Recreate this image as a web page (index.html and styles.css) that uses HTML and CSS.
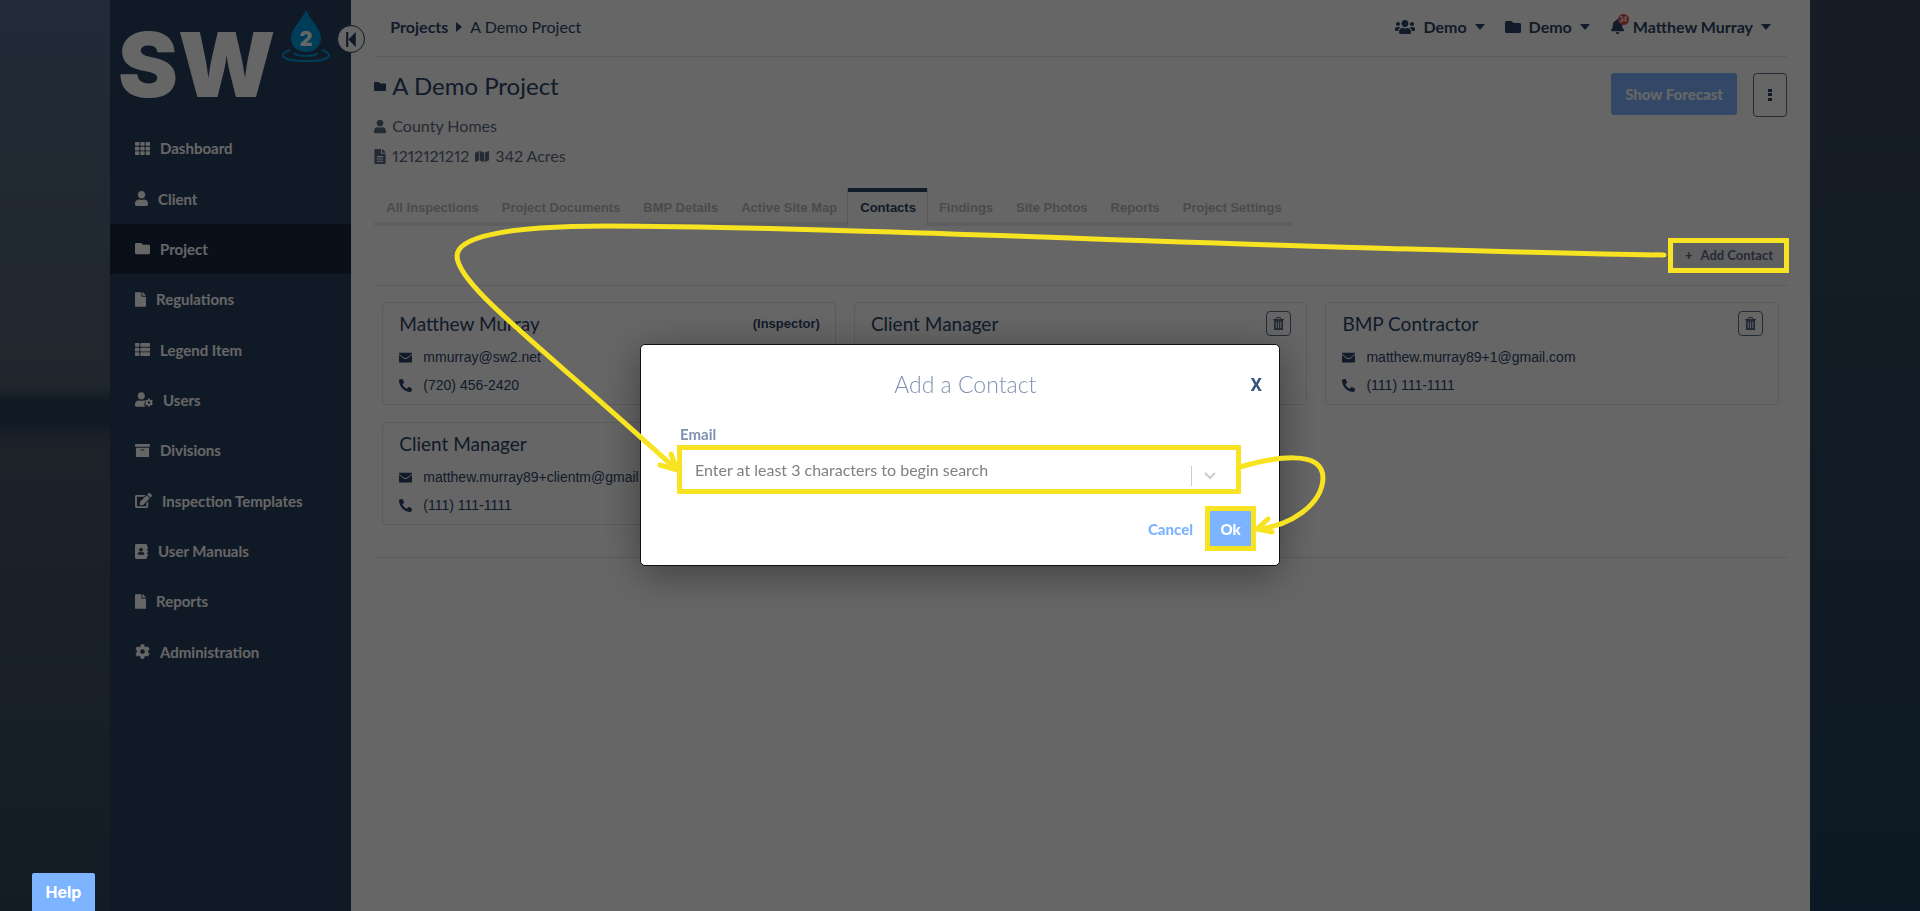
FILE: index.html
```
<!DOCTYPE html>
<html lang="en">
<head>
    <meta charset="UTF-8">
    <meta name="viewport" content="width=device-width, initial-scale=1.0">
    <title>A Demo Project - Contacts</title>
    <link rel="stylesheet" href="styles.css">
</head>
<body>
    <!-- Icon set -->
    <svg class="icon-set" aria-hidden="true">
        <symbol id="i-grid" viewBox="0 0 512 512"><path d="M24 32h102a24 24 0 0 1 24 24v80a24 24 0 0 1-24 24H24a24 24 0 0 1-24-24V56a24 24 0 0 1 24-24zM205 32h102a24 24 0 0 1 24 24v80a24 24 0 0 1-24 24H205a24 24 0 0 1-24-24V56a24 24 0 0 1 24-24zM386 32h102a24 24 0 0 1 24 24v80a24 24 0 0 1-24 24H386a24 24 0 0 1-24-24V56a24 24 0 0 1 24-24zM24 192h102a24 24 0 0 1 24 24v80a24 24 0 0 1-24 24H24a24 24 0 0 1-24-24v-80a24 24 0 0 1 24-24zM205 192h102a24 24 0 0 1 24 24v80a24 24 0 0 1-24 24H205a24 24 0 0 1-24-24v-80a24 24 0 0 1 24-24zM386 192h102a24 24 0 0 1 24 24v80a24 24 0 0 1-24 24H386a24 24 0 0 1-24-24v-80a24 24 0 0 1 24-24zM24 352h102a24 24 0 0 1 24 24v80a24 24 0 0 1-24 24H24a24 24 0 0 1-24-24v-80a24 24 0 0 1 24-24zM205 352h102a24 24 0 0 1 24 24v80a24 24 0 0 1-24 24H205a24 24 0 0 1-24-24v-80a24 24 0 0 1 24-24zM386 352h102a24 24 0 0 1 24 24v80a24 24 0 0 1-24 24H386a24 24 0 0 1-24-24v-80a24 24 0 0 1 24-24z"/></symbol>
        <symbol id="i-list" viewBox="0 0 512 512"><path d="M24 32h102a24 24 0 0 1 24 24v80a24 24 0 0 1-24 24H24a24 24 0 0 1-24-24V56a24 24 0 0 1 24-24zM205 32h283a24 24 0 0 1 24 24v80a24 24 0 0 1-24 24H205a24 24 0 0 1-24-24V56a24 24 0 0 1 24-24zM24 192h102a24 24 0 0 1 24 24v80a24 24 0 0 1-24 24H24a24 24 0 0 1-24-24v-80a24 24 0 0 1 24-24zM205 192h283a24 24 0 0 1 24 24v80a24 24 0 0 1-24 24H205a24 24 0 0 1-24-24v-80a24 24 0 0 1 24-24zM24 352h102a24 24 0 0 1 24 24v80a24 24 0 0 1-24 24H24a24 24 0 0 1-24-24v-80a24 24 0 0 1 24-24zM205 352h283a24 24 0 0 1 24 24v80a24 24 0 0 1-24 24H205a24 24 0 0 1-24-24v-80a24 24 0 0 1 24-24z"/></symbol>
        <symbol id="i-user" viewBox="0 0 448 512"><path d="M224 256c70.7 0 128-57.3 128-128S294.7 0 224 0 96 57.3 96 128s57.3 128 128 128zm89.6 32h-16.7c-22.2 10.2-46.9 16-72.9 16s-50.6-5.8-72.9-16h-16.7C60.2 288 0 348.2 0 422.4V464c0 26.5 21.5 48 48 48h352c26.5 0 48-21.5 48-48v-41.6c0-74.2-60.2-134.4-134.4-134.4z"/></symbol>
        <symbol id="i-folder" viewBox="0 0 512 512"><path d="M464 128H272l-64-64H48C21.49 64 0 85.49 0 112v288c0 26.51 21.49 48 48 48h416c26.51 0 48-21.49 48-48V176c0-26.51-21.49-48-48-48z"/></symbol>
        <symbol id="i-file" viewBox="0 0 384 512"><path d="M224 136V0H24C10.7 0 0 10.7 0 24v464c0 13.3 10.7 24 24 24h336c13.3 0 24-10.7 24-24V160H248c-13.2 0-24-10.8-24-24zm160-14.1v6.1H256V0h6.1c6.4 0 12.5 2.5 17 7l97.9 98c4.5 4.5 7 10.6 7 16.9z"/></symbol>
        <symbol id="i-file-text" viewBox="0 0 384 512"><path fill-rule="evenodd" d="M224 136V0H24C10.7 0 0 10.7 0 24v464c0 13.3 10.7 24 24 24h336c13.3 0 24-10.7 24-24V160H248c-13.2 0-24-10.8-24-24zM84 240h216v40H84zM84 320h216v40H84zM84 400h216v32H84zM384 121.9v6.1H256V0h6.1c6.4 0 12.5 2.5 17 7l97.9 98c4.5 4.5 7 10.6 7 16.9z"/></symbol>
        <symbol id="i-user-cog" viewBox="0 0 640 512"><path d="M224 256c70.7 0 128-57.3 128-128S294.7 0 224 0 96 57.3 96 128s57.3 128 128 128zm89.6 32h-16.7c-22.2 10.2-46.9 16-72.9 16s-50.6-5.8-72.9-16h-16.7C60.2 288 0 348.2 0 422.4V464c0 26.5 21.5 48 48 48h325c-25-22-45-58-48-90l22-26-2-44 20-58z"/><g transform="translate(350 218) scale(.57)"><path d="M487.4 315.7l-42.6-24.6c4.3-23.2 4.3-47 0-70.2l42.6-24.6c4.9-2.8 7.1-8.6 5.5-14-11.1-35.6-30-67.8-54.7-94.6-3.8-4.1-10-5.1-14.8-2.3L380.8 110c-17.9-15.4-38.5-27.3-60.8-35.1V25.8c0-5.6-3.9-10.5-9.4-11.7-36.7-8.2-74.3-7.8-109.2 0-5.5 1.2-9.4 6.1-9.4 11.7V75c-22.2 7.9-42.8 19.8-60.8 35.1L88.7 85.5c-4.9-2.8-11-1.9-14.8 2.3-24.7 26.7-43.6 58.9-54.7 94.6-1.7 5.4.6 11.2 5.5 14L67.3 221c-4.3 23.2-4.3 47 0 70.2l-42.6 24.6c-4.9 2.8-7.1 8.6-5.5 14 11.1 35.6 30 67.8 54.7 94.6 3.8 4.1 10 5.1 14.8 2.3l42.6-24.6c17.9 15.4 38.5 27.3 60.8 35.1v49.2c0 5.6 3.9 10.5 9.4 11.7 36.7 8.2 74.3 7.8 109.2 0 5.5-1.2 9.4-6.1 9.4-11.7v-49.2c22.2-7.9 42.8-19.8 60.8-35.1l42.6 24.6c4.9 2.8 11 1.9 14.8-2.3 24.7-26.7 43.6-58.9 54.7-94.6 1.5-5.5-.7-11.3-5.6-14.1zM256 336c-44.1 0-80-35.9-80-80s35.9-80 80-80 80 35.9 80 80-35.9 80-80 80z"/></g></symbol>
        <symbol id="i-archive" viewBox="0 0 512 512"><path d="M32 448c0 17.7 14.3 32 32 32h384c17.7 0 32-14.3 32-32V160H32v288zm160-212c0-6.6 5.4-12 12-12h104c6.6 0 12 5.4 12 12v8c0 6.6-5.4 12-12 12H204c-6.6 0-12-5.4-12-12v-8zM480 32H32C14.3 32 0 46.3 0 64v48c0 8.8 7.2 16 16 16h480c8.8 0 16-7.2 16-16V64c0-17.7-14.3-32-32-32z"/></symbol>
        <symbol id="i-edit" viewBox="0 0 576 512"><path d="M402.6 83.2l90.2 90.2c3.8 3.8 3.8 10 0 13.8L274.4 405.6l-92.8 10.3c-12.4 1.4-22.9-9.1-21.5-21.5l10.3-92.8L388.8 83.2c3.8-3.8 10-3.8 13.8 0zm162-22.9l-48.8-48.8c-15.2-15.2-39.9-15.2-55.2 0l-35.4 35.4c-3.8 3.8-3.8 10 0 13.8l90.2 90.2c3.8 3.8 10 3.8 13.8 0l35.4-35.4c15.2-15.3 15.2-40 0-55.2zM384 346.2V448H64V128h229.8c3.2 0 6.2-1.3 8.5-3.5l40-40c7.6-7.6 2.2-20.5-8.5-20.5H48C21.5 64 0 85.5 0 112v352c0 26.5 21.5 48 48 48h352c26.5 0 48-21.5 48-48V306.2c0-10.7-12.9-16-20.5-8.5l-40 40c-2.2 2.3-3.5 5.3-3.5 8.5z"/></symbol>
        <symbol id="i-book" viewBox="0 0 448 512"><path fill-rule="evenodd" d="M48 0h320c26 0 48 22 48 48v48h20c7 0 12 5 12 12v40c0 7-5 12-12 12h-20v64h20c7 0 12 5 12 12v40c0 7-5 12-12 12h-20v64h20c7 0 12 5 12 12v40c0 7-5 12-12 12h-20v48c0 26-22 48-48 48H48c-26 0-48-22-48-48V48C0 22 22 0 48 0zM208 128a64 64 0 1 0 0 128 64 64 0 1 0 0-128zM163 272c-37 0-67 26-67 58v19c0 11 10 19 22 19h180c12 0 22-8 22-19v-19c0-32-30-58-67-58-30 12-60 12-90 0z"/></symbol>
        <symbol id="i-cog" viewBox="0 0 512 512"><path d="M487.4 315.7l-42.6-24.6c4.3-23.2 4.3-47 0-70.2l42.6-24.6c4.9-2.8 7.1-8.6 5.5-14-11.1-35.6-30-67.8-54.7-94.6-3.8-4.1-10-5.1-14.8-2.3L380.8 110c-17.9-15.4-38.5-27.3-60.8-35.1V25.8c0-5.6-3.9-10.5-9.4-11.7-36.7-8.2-74.3-7.8-109.2 0-5.5 1.2-9.4 6.1-9.4 11.7V75c-22.2 7.9-42.8 19.8-60.8 35.1L88.7 85.5c-4.9-2.8-11-1.9-14.8 2.3-24.7 26.7-43.6 58.9-54.7 94.6-1.7 5.4.6 11.2 5.5 14L67.3 221c-4.3 23.2-4.3 47 0 70.2l-42.6 24.6c-4.9 2.8-7.1 8.6-5.5 14 11.1 35.6 30 67.8 54.7 94.6 3.8 4.1 10 5.1 14.8 2.3l42.6-24.6c17.9 15.4 38.5 27.3 60.8 35.1v49.2c0 5.6 3.9 10.5 9.4 11.7 36.7 8.2 74.3 7.8 109.2 0 5.5-1.2 9.4-6.1 9.4-11.7v-49.2c22.2-7.9 42.8-19.8 60.8-35.1l42.6 24.6c4.9 2.8 11 1.9 14.8-2.3 24.7-26.7 43.6-58.9 54.7-94.6 1.5-5.5-.7-11.3-5.6-14.1zM256 336c-44.1 0-80-35.9-80-80s35.9-80 80-80 80 35.9 80 80-35.9 80-80 80z"/></symbol>
        <symbol id="i-map" viewBox="0 0 576 512"><path d="M0 117.66v346.32c0 11.32 11.43 19.06 21.94 14.86L160 416V32L20.12 87.95A32 32 0 0 0 0 117.66zM192 416l192 64V96L192 32v384zM554.06 33.16L416 96v384l139.88-55.95A32 32 0 0 0 576 394.34V48.02c0-11.32-11.43-19.06-21.94-14.86z"/></symbol>
        <symbol id="i-users" viewBox="0 0 640 512"><path d="M96 224c35.3 0 64-28.7 64-64s-28.7-64-64-64-64 28.7-64 64 28.7 64 64 64zm448 0c35.3 0 64-28.7 64-64s-28.7-64-64-64-64 28.7-64 64 28.7 64 64 64zm32 32h-64c-17.6 0-33.5 7.1-45.1 18.6 40.3 22.1 68.9 62 75.1 109.4h66c17.7 0 32-14.3 32-32v-32c0-35.3-28.7-64-64-64zm-256 0c61.9 0 112-50.1 112-112S381.9 32 320 32 208 82.1 208 144s50.1 112 112 112zm76.8 32h-8.3c-20.8 10-43.9 16-68.5 16s-47.6-6-68.5-16h-8.3C179.6 288 128 339.6 128 403.2V432c0 26.5 21.5 48 48 48h288c26.5 0 48-21.5 48-48v-28.8c0-63.6-51.6-115.2-115.2-115.2zm-223.7-13.4C161.5 263.1 145.6 256 128 256H64c-35.3 0-64 28.7-64 64v32c0 17.7 14.3 32 32 32h65.9c6.3-47.4 34.9-87.3 75.2-109.4z"/></symbol>
        <symbol id="i-bell" viewBox="0 0 448 512"><path d="M224 512c35.32 0 63.97-28.65 63.97-64H160.03c0 35.35 28.65 64 63.97 64zm215.39-149.71c-19.32-20.76-55.47-51.99-55.47-154.29 0-77.7-54.48-139.9-127.94-155.16V32c0-17.67-14.32-32-31.98-32s-31.98 14.33-31.98 32v20.84C118.56 68.1 64.08 130.3 64.08 208c0 102.3-36.15 133.53-55.47 154.29-6 6.45-8.66 14.16-8.61 21.71.11 16.4 12.98 32 32.1 32h383.8c19.12 0 32-15.6 32.1-32 .05-7.55-2.61-15.27-8.61-21.71z"/></symbol>
        <symbol id="i-mail" viewBox="0 0 512 512"><path d="M24 64h464c13 0 24 11 24 24v16c-70 60-140 115-205 165-30 24-72 24-102 0C140 219 70 164 0 104V88c0-13 11-24 24-24zM0 152c58 48 118 94 180 141 45 34 107 34 152 0 62-47 122-93 180-141v272c0 13-11 24-24 24H24c-13 0-24-11-24-24z"/></symbol>
        <symbol id="i-phone" viewBox="0 0 512 512"><path transform="translate(512 0) scale(-1 1)" d="M493.4 24.6l-104-24c-11.3-2.6-22.9 3.3-27.5 13.9l-48 112c-4.2 9.8-1.4 21.3 6.9 28l60.6 49.6c-36 76.7-98.9 140.5-177.2 177.2l-49.6-60.6c-6.8-8.3-18.2-11.1-28-6.9l-112 48C3.9 366.5-2 378.1.6 389.4l24 104C27.1 504.2 36.7 512 48 512c256.1 0 464-207.5 464-464 0-11.2-7.7-20.9-18.6-23.4z"/></symbol>
        <symbol id="i-trash" viewBox="0 0 12 14"><path fill-rule="evenodd" d="M4 0h4l1 2h3v1.5h-1V14H1V3.5H0V2h3zM4.5 1L4 2h4l-.5-1zM3 5v7h1V5zM5.5 5v7h1V5zM8 5v7h1V5z"/></symbol>
        <symbol id="i-first" viewBox="0 0 10 14"><path d="M0 0h2v14H0zM9 0v14L2 7z"/></symbol>
        <symbol id="i-down" viewBox="0 0 10 6"><path d="M0 0h10L5 6z"/></symbol>
        <symbol id="i-right" viewBox="0 0 6 10"><path d="M0 0v10l6-5z"/></symbol>
        <symbol id="i-dots" viewBox="0 0 4 12"><path d="M0 0h4v3H0zM0 4h4v3H0zM0 9h4v3H0z"/></symbol>
        <symbol id="i-chevron" viewBox="0 0 12 8"><path fill="none" stroke="currentColor" stroke-width="2" d="M1 1l5 5 5-5"/></symbol>
    </svg>

    <div class="shell">
        <!-- Sidebar -->
        <aside class="sidebar">
            <a class="logo" href="#" aria-label="SW2">
                <span class="logo-text">SW</span>
                <svg class="logo-drop" viewBox="0 0 50 54">
                    <path fill="#009adf" d="M25 0c3 8 15 19 15 28 0 8-6 14-15 14s-15-6-15-14C10 19 22 8 25 0z"/>
                    <path fill="none" stroke="#009adf" stroke-width="2" d="M9 40c-12 4-10 11 16 11s28-7 16-11M13 43c4 4 20 4 24 0"/>
                    <text x="25" y="36" text-anchor="middle">2</text>
                </svg>
            </a>
            <button class="collapse" type="button" aria-label="Collapse menu"><svg class="icon"><use href="#i-first"/></svg></button>
            <nav class="menu">
                <a href="#"><svg class="icon w15"><use href="#i-grid"/></svg>Dashboard</a>
                <a href="#"><svg class="icon w13"><use href="#i-user"/></svg>Client</a>
                <a href="#" class="active"><svg class="icon w15"><use href="#i-folder"/></svg>Project</a>
                <a href="#"><svg class="icon w11"><use href="#i-file"/></svg>Regulations</a>
                <a href="#"><svg class="icon w15"><use href="#i-list"/></svg>Legend Item</a>
                <a href="#"><svg class="icon w18"><use href="#i-user-cog"/></svg>Users</a>
                <a href="#"><svg class="icon w15"><use href="#i-archive"/></svg>Divisions</a>
                <a href="#"><svg class="icon w17"><use href="#i-edit"/></svg>Inspection Templates</a>
                <a href="#"><svg class="icon w13"><use href="#i-book"/></svg>User Manuals</a>
                <a href="#"><svg class="icon w11"><use href="#i-file"/></svg>Reports</a>
                <a href="#"><svg class="icon w15"><use href="#i-cog"/></svg>Administration</a>
            </nav>
        </aside>

        <!-- Main content -->
        <main class="content">
            <header class="topbar">
                <div class="breadcrumb">
                    <a href="#">Projects</a>
                    <svg class="icon crumb-arrow"><use href="#i-right"/></svg>
                    <span>A Demo Project</span>
                </div>
                <div class="account">
                    <button type="button"><svg class="icon w20"><use href="#i-users"/></svg>Demo<svg class="icon caret"><use href="#i-down"/></svg></button>
                    <button type="button"><svg class="icon w16"><use href="#i-folder"/></svg>Demo<svg class="icon caret"><use href="#i-down"/></svg></button>
                    <button type="button"><span class="bell"><svg class="icon w15"><use href="#i-bell"/></svg><span class="badge">34</span></span>Matthew Murray<svg class="icon caret"><use href="#i-down"/></svg></button>
                </div>
            </header>

            <section class="project">
                <div>
                    <h1><svg class="icon w12"><use href="#i-folder"/></svg>A Demo Project</h1>
                    <p><svg class="icon w12"><use href="#i-user"/></svg>County Homes</p>
                    <p><svg class="icon w12"><use href="#i-file-text"/></svg>1212121212 <svg class="icon w14"><use href="#i-map"/></svg>342 Acres</p>
                </div>
                <div class="project-actions">
                    <button class="forecast" type="button">Show Forecast</button>
                    <button class="more" type="button" aria-label="More actions"><svg class="icon"><use href="#i-dots"/></svg></button>
                </div>
            </section>

            <nav class="tabs">
                <a href="#">All Inspections</a>
                <a href="#">Project Documents</a>
                <a href="#">BMP Details</a>
                <a href="#">Active Site Map</a>
                <a href="#" class="active">Contacts</a>
                <a href="#">Findings</a>
                <a href="#">Site Photos</a>
                <a href="#">Reports</a>
                <a href="#">Project Settings</a>
            </nav>

            <div class="toolbar">
                <button class="add-contact" type="button"><span>+</span>Add Contact</button>
            </div>

            <section class="cards">
                <article class="card">
                    <div class="card-head"><h2>Matthew Murray</h2><strong>(Inspector)</strong></div>
                    <p><svg class="icon w13"><use href="#i-mail"/></svg>mmurray@sw2.net</p>
                    <p><svg class="icon w13"><use href="#i-phone"/></svg>(720) 456-2420</p>
                </article>
                <article class="card">
                    <div class="card-head"><h2>Client Manager</h2><button type="button" aria-label="Delete contact"><svg class="icon"><use href="#i-trash"/></svg></button></div>
                    <p></p>
                    <p></p>
                </article>
                <article class="card">
                    <div class="card-head"><h2>BMP Contractor</h2><button type="button" aria-label="Delete contact"><svg class="icon"><use href="#i-trash"/></svg></button></div>
                    <p><svg class="icon w13"><use href="#i-mail"/></svg>matthew.murray89+1@gmail.com</p>
                    <p><svg class="icon w13"><use href="#i-phone"/></svg>(111) 111-1111</p>
                </article>
                <article class="card">
                    <div class="card-head"><h2>Client Manager</h2></div>
                    <p><svg class="icon w13"><use href="#i-mail"/></svg>matthew.murray89+clientm@gmail.com</p>
                    <p><svg class="icon w13"><use href="#i-phone"/></svg>(111) 111-1111</p>
                </article>
            </section>
        </main>
    </div>

    <!-- Add contact dialog -->
    <div class="overlay">
        <form class="modal" role="dialog" aria-labelledby="modalTitle">
            <div class="modal-head">
                <h2 id="modalTitle">Add a Contact</h2>
                <button class="close" type="button" aria-label="Close">X</button>
            </div>
            <label for="email">Email</label>
            <div class="search mark">
                <input type="text" id="email" placeholder="Enter at least 3 characters to begin search">
                <span class="search-arrow"><svg class="icon"><use href="#i-chevron"/></svg></span>
            </div>
            <div class="modal-actions">
                <button class="cancel" type="button">Cancel</button>
                <button class="ok mark" type="submit">Ok</button>
            </div>
        </form>
    </div>

    <!-- Walkthrough marks -->
    <div class="mark add-mark"></div>
    <svg class="arrows" width="1920" height="600" viewBox="0 0 1920 600" aria-hidden="true">
        <path d="M1664 255C1300 250 840 226 607 226C500 226 457 238 457 256C457 285 540 345 676 469"/>
        <path d="M671 454L677 470L660 465"/>
        <path d="M1240 467C1272 458 1323 448 1323 478C1322 505 1290 526 1258 529"/>
        <path d="M1268 519L1257 529L1272 532"/>
    </svg>

    <button class="help" type="button">Help</button>
</body>
</html>
```
FILE: styles.css
```
* {
    box-sizing: border-box;
}
body {
    font-family: Lato, "Open Sans", sans-serif;
    margin: 0;
    min-height: 100vh;
    color: #2c4568;
    background-color: #2a445e;
    background-image:
        linear-gradient(to bottom, #566b8d 0, #50606f 385px, #28405a 404px, #28405a 420px, #4a5668 445px, #30485c 100%),
        linear-gradient(to bottom, #3a4a5e 0, #20405a 100%);
    background-size: 50% 100%, 50% 100%;
    background-position: left top, right top;
    background-repeat: no-repeat;
}
h1, h2, p {
    margin: 0;
    font-weight: normal;
}
a {
    color: inherit;
    text-decoration: none;
}
button, input {
    font-family: inherit;
    border: none;
    background: none;
    color: inherit;
    padding: 0;
}
button {
    cursor: pointer;
}

/* Icons */
.icon-set {
    display: none;
}
.icon {
    display: block;
    flex: none;
    fill: currentColor;
    width: 15px;
    height: 15px;
}
.w11 { width: 11px; }
.w12 { width: 12px; }
.w13 { width: 13px; }
.w14 { width: 14px; }
.w16 { width: 16px; height: 16px; }
.w17 { width: 17px; }
.w18 { width: 18px; }
.w20 { width: 20px; height: 16px; }

.shell {
    display: flex;
    min-height: 100vh;
    margin: 0 110px;
}

/* Sidebar */
.sidebar {
    position: relative;
    flex: 0 0 240px;
    background-color: #284160;
    color: white;
}
.logo {
    display: flex;
    gap: 6px;
    height: 123px;
    padding: 10px 20px 0 8px;
}
.logo-text {
    flex: 1;
    font-family: Inter, sans-serif;
    font-size: 90px;
    font-weight: 900;
    line-height: 109px;
}
.logo-drop {
    width: 50px;
    height: 54px;
}
.logo-drop text {
    fill: white;
    font-family: Inter, sans-serif;
    font-size: 20px;
    font-weight: 900;
}
.collapse {
    position: absolute;
    top: 25px;
    right: -14px;
    display: grid;
    place-items: center;
    width: 28px;
    height: 28px;
    border: 1px solid #284160;
    border-radius: 50%;
    background-color: white;
    color: #284160;
}
.menu {
    display: grid;
    grid-auto-rows: 1fr;
    min-height: 554px;
}
.menu a {
    display: flex;
    align-items: center;
    gap: 10px;
    padding-left: 25px;
    font-size: 15px;
    font-weight: bold;
}
.menu a.active {
    background-color: #182a42;
}

/* Main content */
.content {
    flex: 1;
    padding: 0 23px;
    background-color: white;
}
.topbar {
    display: flex;
    justify-content: space-between;
    align-items: center;
    height: 57px;
    padding: 0 16px 3px;
    border-bottom: 1px solid #e3e3e3;
    font-size: 16px;
}
.breadcrumb {
    display: flex;
    align-items: center;
    gap: 8px;
}
.breadcrumb a {
    font-weight: bold;
}
.crumb-arrow {
    width: 6px;
    height: 10px;
}
.account {
    display: flex;
    gap: 20px;
}
.account button {
    display: flex;
    align-items: center;
    gap: 8px;
    font-size: 16px;
    font-weight: bold;
}
.caret {
    width: 10px;
    height: 6px;
}
.bell {
    position: relative;
}
.badge {
    position: absolute;
    top: -5px;
    right: -4px;
    width: 11px;
    height: 11px;
    border-radius: 50%;
    background-color: #e04848;
    color: white;
    font-size: 7px;
    line-height: 11px;
}

/* Project summary */
.project {
    display: flex;
    justify-content: space-between;
    padding-top: 14px;
}
.project h1, .project p {
    display: flex;
    align-items: center;
    gap: 6px;
}
.project h1 {
    font-size: 24px;
    line-height: 30px;
    margin-bottom: 10px;
}
.project p {
    font-size: 16px;
    line-height: 30px;
    color: #5c6b84;
    font-variant-numeric: proportional-nums;
}
.project-actions {
    display: flex;
    align-items: flex-start;
    gap: 16px;
    padding-top: 2px;
}
.forecast {
    height: 42px;
    padding: 0 14px;
    border-radius: 3px;
    background-color: #7db4ff;
    color: white;
    font-size: 15px;
    font-weight: 900;
}
.more {
    display: grid;
    place-items: center;
    width: 34px;
    height: 44px;
    border: 1px solid #5c6b84;
    border-radius: 4px;
}
.more .icon {
    width: 4px;
    height: 12px;
}

/* Tabs */
.tabs {
    display: flex;
    width: fit-content;
    margin-top: 17px;
    font-family: "Liberation Sans", Arial, sans-serif;
    font-size: 13px;
    font-weight: bold;
    color: #bbb;
}
.tabs a {
    padding: 8px 11px 7px 12px;
    line-height: 15px;
    border-top: 4px solid transparent;
    border-bottom: 4px solid #eee;
}
.tabs a.active {
    color: #2c4568;
    border-top-color: #2c4568;
    border-bottom-color: transparent;
    box-shadow: 1px 0 #ddd, -1px 0 #ddd;
}

.toolbar {
    display: flex;
    justify-content: flex-end;
    padding: 17px 3px 18px;
    border-bottom: 1px solid #e3e3e3;
}
.add-contact {
    display: flex;
    align-items: center;
    gap: 8px;
    height: 24px;
    padding: 0 11px;
    background-color: #f0f0f0;
    color: #5c6b84;
    font-size: 13px;
    font-weight: bold;
}
.add-contact span {
    font-weight: 900;
}

/* Contact cards */
.cards {
    display: grid;
    grid-template-columns: repeat(3, 1fr);
    gap: 17px 18px;
    padding: 16px 8px 32px;
    border-bottom: 1px solid #e3e3e3;
    font-family: "Liberation Sans", Arial, sans-serif;
}
.card {
    padding: 8px 15px 5px 16px;
    border: 1px solid #e3e3e3;
    border-radius: 4px;
}
.card-head {
    display: flex;
    justify-content: space-between;
    align-items: center;
    height: 25px;
    margin-bottom: 7px;
}
.card h2 {
    font-family: Lato, sans-serif;
    font-size: 19px;
}
.card strong {
    font-size: 13px;
}
.card-head button {
    display: grid;
    place-items: center;
    width: 25px;
    height: 25px;
    border: 1px solid #5c6b84;
    border-radius: 4px;
    color: #5c6b84;
}
.card-head .icon {
    width: 11px;
    height: 13px;
}
.card p {
    display: flex;
    align-items: center;
    gap: 11px;
    height: 28px;
    font-size: 14px;
}

/* Dialog */
.overlay {
    position: fixed;
    inset: 0;
    background-color: rgba(0, 0, 0, 0.6);
}
.modal {
    width: 640px;
    margin: 344px auto 0;
    padding: 24px 23px 14px 39px;
    border: 1px solid #111;
    border-radius: 5px;
    background-color: white;
    box-shadow: 0 8px 40px rgba(0, 0, 0, 0.4);
}
.modal-head {
    display: flex;
    align-items: center;
    line-height: 30px;
    margin-bottom: 26px;
}
.modal-head h2 {
    flex: 1;
    text-align: center;
    font-size: 23px;
    font-weight: 300;
    color: #7f90b0;
}
.close {
    margin-right: -6px;
    font-family: Roboto, sans-serif;
    font-size: 18px;
    font-weight: bold;
    color: #3a557f;
}
.modal label {
    display: block;
    font-size: 15px;
    font-weight: bold;
    line-height: 18px;
    color: #7f90b0;
}
.mark {
    border: 5px solid #f8e322;
}
.search {
    display: flex;
    height: 49px;
    margin: 2px 15px 0 -3px;
}
.search input {
    flex: 1;
    padding: 0 13px;
    outline: none;
    font-size: 16px;
}
.search input::placeholder {
    color: #808080;
}
.search-arrow {
    display: flex;
    align-items: center;
    align-self: flex-end;
    height: 20px;
    margin: 0 20px 3px 0;
    padding-left: 12px;
    border-left: 1px solid #ccc;
    color: #ccc;
}
.search-arrow .icon {
    width: 12px;
    height: 8px;
}
.modal-actions {
    display: flex;
    justify-content: flex-end;
    gap: 12px;
    margin-top: 12px;
}
.modal-actions button {
    font-size: 15px;
    font-weight: 900;
}
.cancel {
    color: #7db4ff;
}
.ok {
    width: 51px;
    height: 45px;
    background-color: #7db4ff;
    color: white;
}

/* Walkthrough marks */
.add-mark {
    position: absolute;
    top: 238px;
    right: 131px;
    width: 121px;
    height: 35px;
}
.arrows {
    position: absolute;
    top: 0;
    left: 0;
    max-width: 100%;
    pointer-events: none;
    fill: none;
    stroke: #f8e322;
    stroke-width: 5;
    stroke-linecap: round;
}

.help {
    position: fixed;
    left: 32px;
    bottom: 0;
    width: 63px;
    height: 38px;
    border-radius: 2px 2px 0 0;
    background-color: #7db4ff;
    color: white;
    font-family: Inter, sans-serif;
    font-size: 16px;
    font-weight: bold;
}
```
